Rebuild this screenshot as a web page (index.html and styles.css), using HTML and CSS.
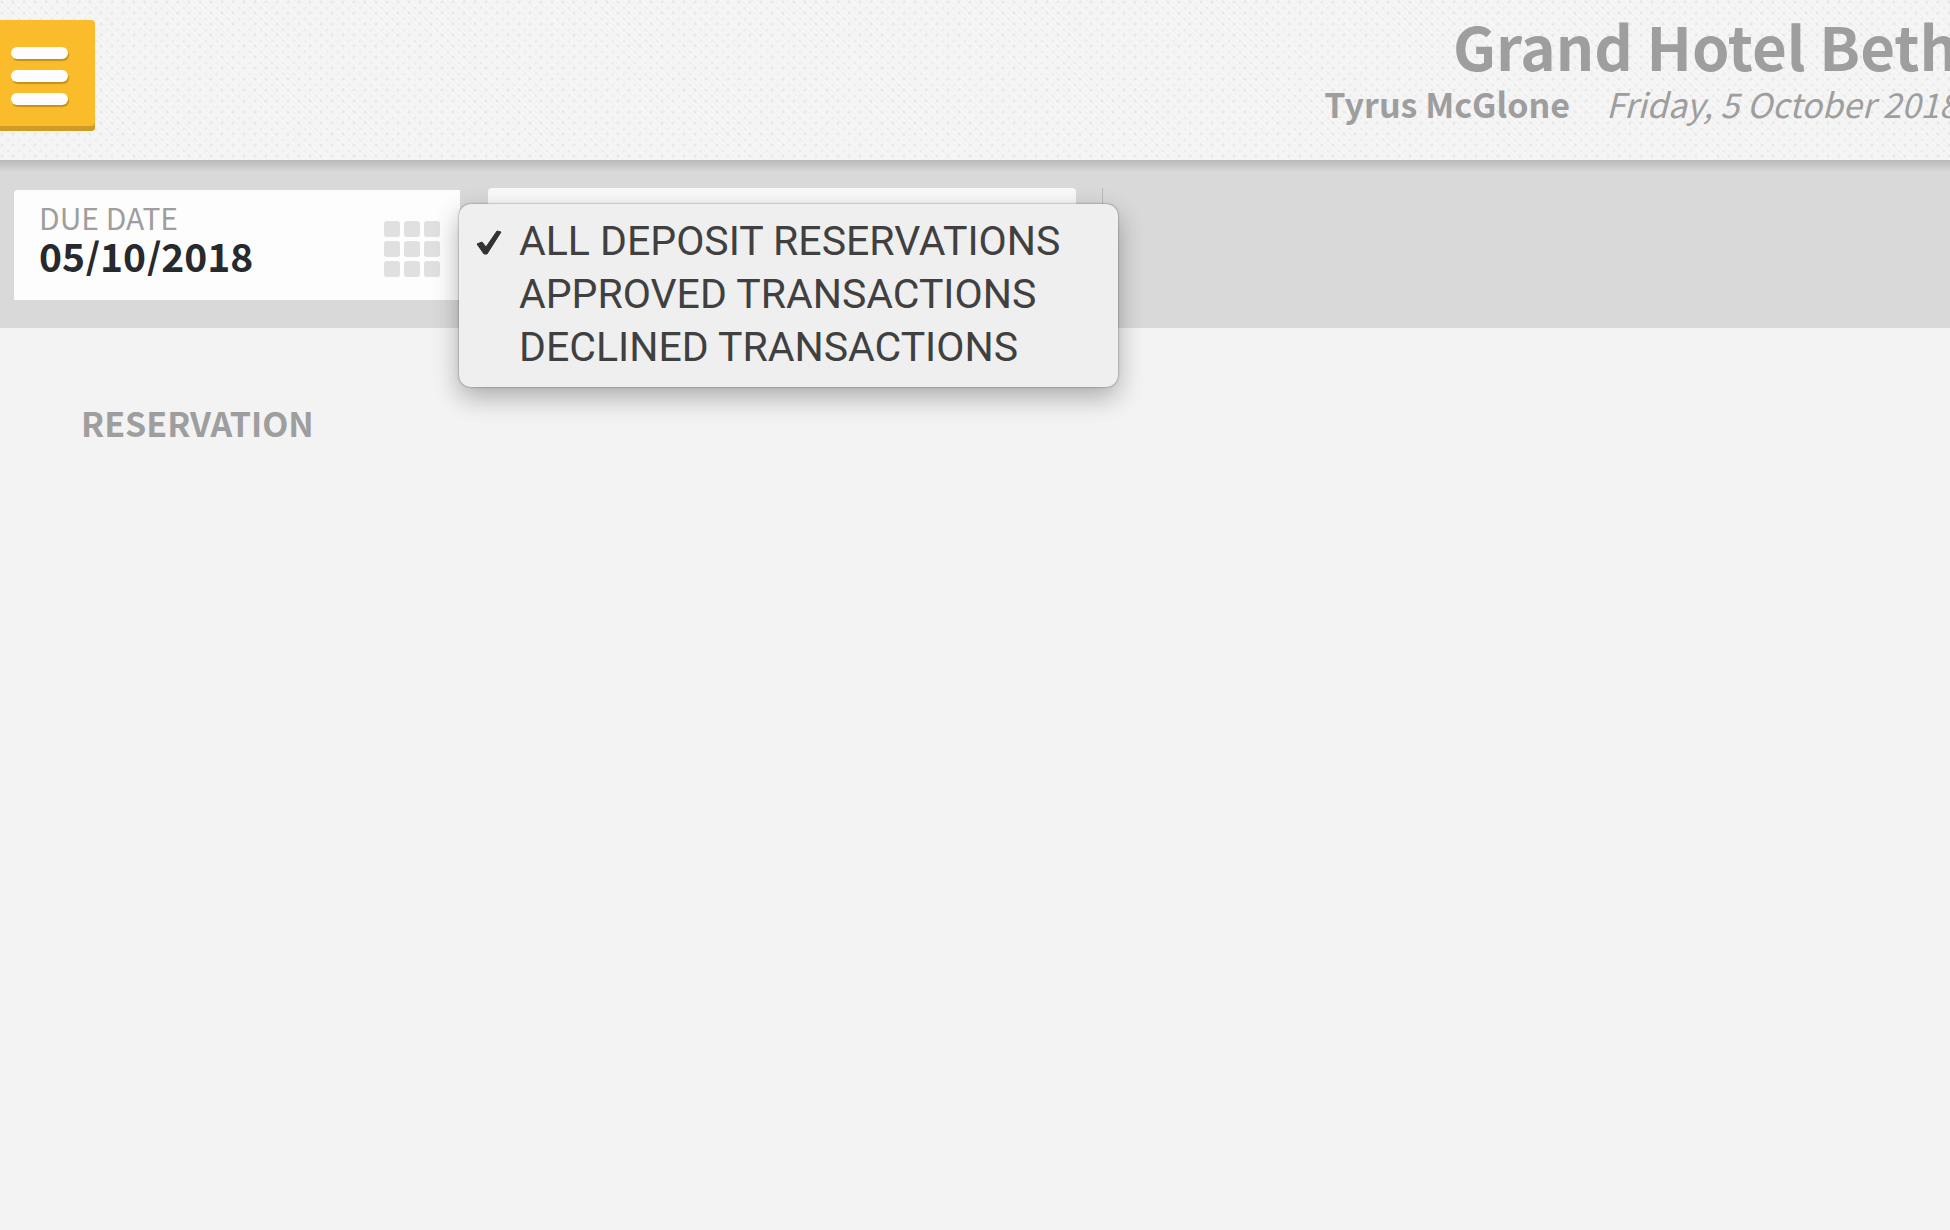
FILE: index.html
```
<!DOCTYPE html>
<html lang="en">
<head>
    <meta charset="UTF-8">
    <meta name="viewport" content="width=device-width, initial-scale=1.0">
    <title>Deposit Reservations</title>
    <link rel="stylesheet" href="styles.css">
</head>
<body>
    <header class="header">
        <button type="button" class="menu-button" aria-label="Menu">
            <span class="bar"></span>
            <span class="bar"></span>
            <span class="bar"></span>
        </button>

        <div class="account">
            <h1>Grand Hotel Beth</h1>
            <p><strong>Tyrus McGlone</strong><em>Friday, 5 October 2018</em></p>
        </div>
    </header>

    <form class="toolbar">
        <div class="date-field">
            <div class="date-text">
                <label for="dueDate">DUE DATE</label>
                <input type="text" id="dueDate" name="dueDate" value="05/10/2018">
            </div>
            <svg class="grid-icon" viewBox="0 0 56 56" aria-hidden="true">
                <rect x="0" y="0" width="16" height="16" rx="3"/>
                <rect x="20" y="0" width="16" height="16" rx="3"/>
                <rect x="40" y="0" width="16" height="16" rx="3"/>
                <rect x="0" y="20" width="16" height="16" rx="3"/>
                <rect x="20" y="20" width="16" height="16" rx="3"/>
                <rect x="40" y="20" width="16" height="16" rx="3"/>
                <rect x="0" y="40" width="16" height="16" rx="3"/>
                <rect x="20" y="40" width="16" height="16" rx="3"/>
                <rect x="40" y="40" width="16" height="16" rx="3"/>
            </svg>
        </div>

        <div class="filter">
            <select class="filter-select" name="filter" aria-label="Filter">
                <option></option>
            </select>

            <!-- open dropdown -->
            <div class="dropdown">
                <button type="button" class="option selected">
                    <svg class="check" viewBox="0 0 28 36" aria-hidden="true">
                        <path d="M2 20 L7 18 L11 23 L22 7 L26 8 L12 30 L9 30 Z" />
                    </svg>
                    ALL DEPOSIT RESERVATIONS
                </button>
                <button type="button" class="option">APPROVED TRANSACTIONS</button>
                <button type="button" class="option">DECLINED TRANSACTIONS</button>
            </div>
        </div>
    </form>

    <main class="content">
        <h2>RESERVATION</h2>
    </main>
</body>
</html>
```

FILE: styles.css
```
* {
    box-sizing: border-box;
}

body {
    font-family: "Noto Sans CJK JP", "Source Sans Pro", sans-serif;
    background-color: #f3f3f3;
    color: #9e9e9e;
    margin: 0;
    min-height: 100vh;
    overflow-x: hidden;
}

h1, h2, p {
    margin: 0;
}

/* header */
.header {
    display: flex;
    justify-content: space-between;
    align-items: flex-start;
    height: 160px;
    background-color: #f6f6f6;
    background-image:
        radial-gradient(circle at 2px 2px, rgba(0, 0, 0, 0.05) 1px, transparent 2px),
        radial-gradient(circle at 8px 8px, rgba(0, 0, 0, 0.03) 1px, transparent 2px),
        repeating-linear-gradient(45deg, rgba(0, 0, 0, 0.01) 0 2px, transparent 2px 4px);
    background-size: 11px 11px, 11px 11px, auto;
    overflow: hidden;
}

.menu-button {
    display: flex;
    flex-direction: column;
    gap: 11px;
    width: 95px;
    height: 111px;
    margin-top: 20px;
    padding: 27px 27px 0 11px;
    background-color: #fbbc2c;
    border: none;
    border-radius: 0 4px 4px 0;
    box-shadow: inset 0 -5px 0 #cc9b28;
    cursor: pointer;
}

.bar {
    width: 100%;
    height: 12px;
    background-color: #fdfdfd;
    border-radius: 6px;
    box-shadow: 1px 2px 1px rgba(120, 80, 0, 0.4);
}

.account {
    margin-right: -8px;
    padding-top: 15px;
    text-align: right;
    white-space: nowrap;
}

.account h1 {
    font-size: 60px;
    line-height: 60px;
    font-weight: 700;
}

.account p {
    font-size: 34px;
    line-height: 58px;
}

.account strong {
    font-weight: 700;
    margin-right: 36px;
}

.account em {
    font-weight: 400;
}

/* toolbar */
.toolbar {
    display: flex;
    align-items: flex-start;
    height: 168px;
    padding: 28px 14px 0;
    background-color: #d9d9d9;
    background-image: linear-gradient(rgba(0, 0, 0, 0.15), transparent 12px);
}

.date-field {
    display: flex;
    justify-content: space-between;
    align-items: flex-start;
    width: 446px;
    height: 110px;
    margin-top: 2px;
    padding: 10px 20px 0 25px;
    background-color: #fdfdfd;
    border-radius: 4px 0 0 0;
}

.date-text label {
    display: block;
    font-size: 30px;
    line-height: 34px;
    font-weight: 400;
}

.date-text input {
    display: block;
    width: 280px;
    height: 42px;
    padding: 0;
    border: none;
    background: none;
    font-family: inherit;
    font-size: 39px;
    font-weight: 700;
    color: #27292c;
}

.grid-icon {
    width: 56px;
    height: 56px;
    margin-top: 21px;
    fill: #e0e0e0;
}

.filter {
    position: relative;
    height: 112px;
    margin-left: 28px;
    padding-right: 26px;
    border-right: 1px solid #bababa;
}

.filter-select {
    appearance: none;
    width: 588px;
    height: 112px;
    border: none;
    border-radius: 4px;
    background-color: #f9f9f9;
}

.dropdown {
    position: absolute;
    top: 16px;
    left: -29px;
    width: 659px;
    padding: 11px 0 13px;
    background-color: #efefef;
    border-radius: 12px;
    box-shadow: 0 0 2px rgba(0, 0, 0, 0.5), 0 10px 26px rgba(0, 0, 0, 0.3);
}

.option {
    display: flex;
    align-items: center;
    width: 100%;
    height: 53px;
    padding: 0 0 0 60px;
    border: none;
    background: none;
    font-family: Roboto, sans-serif;
    font-size: 41px;
    line-height: 53px;
    color: #404040;
    white-space: nowrap;
}

.option.selected {
    padding-left: 16px;
}

.check {
    width: 28px;
    height: 36px;
    margin-right: 16px;
    fill: #333333;
    stroke: #333333;
    stroke-width: 1;
    stroke-linejoin: round;
}

/* content */
.content {
    padding: 71px 81px;
}

.content h2 {
    font-size: 34px;
    line-height: 48px;
    font-weight: 700;
}
```
